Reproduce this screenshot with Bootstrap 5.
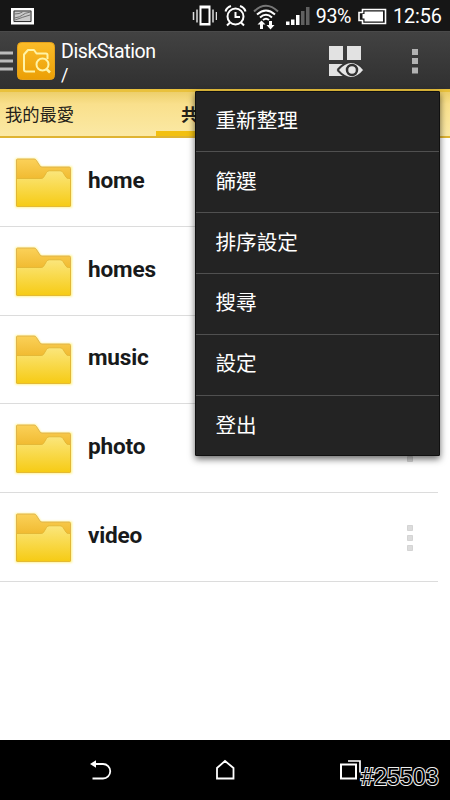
<!DOCTYPE html>
<html lang="zh-Hant">
<head>
<meta charset="utf-8">
<meta name="viewport" content="width=device-width, initial-scale=1">
<title>DiskStation</title>
<link href="https://cdn.jsdelivr.net/npm/bootstrap@5.3.0/dist/css/bootstrap.min.css" rel="stylesheet">
<style>
  body { font-family: Roboto, "Noto Sans CJK TC", sans-serif; background: #fff; }
  .screen { width: 450px; height: 800px; }
  .screen svg { display: block; flex: none; }
  .status-bar { height: 31px; background: #161616; color: #fff; padding: 1px 7px 0 10px; font-size: 19.8px; line-height: 32px; }
  .status-icons { gap: 6px; }
  .status-pct { font-size: 19.6px; letter-spacing: -.4px; padding-top: 2px; }
  .status-time { width: 50px; letter-spacing: -.1px; padding-top: 2px; }
  .action-bar { height: 58px; background: linear-gradient(#424242, #303030); border-top: 1px solid #4a4a4a; color: #fff; }
  .title-block { margin: 6px 0 0 6px; }
  .title-line { font-size: 19.6px; letter-spacing: -.45px; line-height: 23px; }
  .path-line { font-size: 18px; line-height: 24px; }
  .tab-strip { height: 49px; background: linear-gradient(#edcf6b 0, #f9e08c 12px, #fbe9a5 100%); border-top: 3px solid #e9c13c; border-bottom: 2px solid #dfb433; font-size: 17.3px; color: #25221a; }
  .tab-item { line-height: 46px; }
  .tab-fav { width: 156px; padding-left: 5px; }
  .tab-shared { width: 157px; height: 44px; padding-left: 25px; border-bottom: 5px solid #f2c011; font-weight: 600; }
  .file-row { height: 88.75px; width: 438px; border-bottom: 1px solid #dcdcdc; padding: 2px 25px 0 12px; }
  .file-name { font-size: 22.6px; letter-spacing: -.2px; font-weight: 700; color: #181a1b; line-height: 30px; margin: -4px 0 0 12px; }
  .nav-area { height: 60px; background: #000; padding-top: 18px; }
  .nav-keys { width: 274px; }
  .overflow-menu { top: 91px; left: 195px; width: 245px; height: 364.5px; background: #232323; border: 1px solid #101010; box-shadow: 0 3px 7px rgba(0,0,0,.6); border-radius: 1px; }
  .menu-entry { height: 60.9px; border-bottom: 1px solid #505050; padding: 0 0 0 19.5px; font-size: 20.6px; color: #fff; }
  .menu-entry:first-child { height: 60.2px; }
  .menu-entry:last-child { border-bottom: 0; }
  .watermark { left: 361px; top: 762.5px; font: 23.3px/28px "Liberation Sans", sans-serif; color: #000; -webkit-text-stroke: 2px #eee; paint-order: stroke fill; }
</style>
<script src="https://cdn.jsdelivr.net/npm/bootstrap@5.3.0/dist/js/bootstrap.bundle.min.js"></script>
</head>
<body>
<svg width="0" height="0" class="position-absolute" aria-hidden="true">
  <defs>
    <linearGradient id="backGrad" x1="0" y1="0" x2="0" y2="1"><stop offset="0" stop-color="#fbd159"/><stop offset=".45" stop-color="#f0b92e"/></linearGradient>
    <linearGradient id="frontGrad" x1="0" y1="0" x2="0" y2="1"><stop offset="0" stop-color="#fbe67c"/><stop offset="1" stop-color="#f6cb14"/></linearGradient>
    <linearGradient id="appGrad" x1="0" y1="0" x2="0" y2="1"><stop offset="0" stop-color="#fbbc29"/><stop offset="1" stop-color="#eb9f05"/></linearGradient>
    <filter id="glow" x="-20%" y="-20%" width="140%" height="140%"><feGaussianBlur stdDeviation="1.2"/></filter>
    <symbol id="folder" viewBox="0 0 64 60">
      <g transform="translate(0 .5)">
      <path d="M4.500 6h19l5 8H59v39H4.500z" fill="#fff27a" stroke="#fff27a" stroke-width="2" filter="url(#glow)"/>
      <path d="M5.500 5.500H22q1.500 0 2.300 1.300L28 12.500q.8 1 2 1H57q1.500 0 1.500 1.500V52.500H4.500V6.500q0-1 1-1z" fill="url(#backGrad)" stroke="#dcb04a" stroke-width=".9"/>
      <path d="M4.500 25H29q1.800 0 2.700-1.300L34.500 19q1-1.700 3-1.700H48q2 0 3 1.700l3 4.700q.8 1.300 2.500 1.300h2V52q0 1-1 1h-52q-1 0-1-1z" fill="url(#frontGrad)" stroke="#e0b432" stroke-width=".8"/>
      </g>
    </symbol>
    <symbol id="dots" viewBox="0 0 6 26"><path d="M.5.500h5v5h-5zM.5 10.500h5v5h-5zM.5 20.500h5v5h-5z" fill="#dcdcdc" stroke="#c8c8c8" stroke-width=".7"/></symbol>
  </defs>
</svg>

<main class="screen position-relative overflow-hidden d-flex flex-column">
  <header class="status-bar d-flex align-items-center justify-content-between">
    <svg width="25" height="18" viewBox="0 0 25 18"><path d="M2 2h21v14.500H2z" fill="#ddd" stroke="#fff" stroke-width="2"/><path d="M4 4h17v10.500H4z" fill="#c9c9c9" stroke="#333"/><path d="M4.500 11q6-1 8-3t8-3M4.500 7q5 0 8-2M5 13q8-3 15-5" fill="none" stroke="#666" stroke-width=".9"/></svg>
    <div class="status-icons d-flex align-items-center">
      <svg width="26" height="24" viewBox="-1 0 26 24"><path d="M8.500 2.500h9v18h-9z" fill="#111" stroke="#fff" stroke-width="2"/><path d="M8 3.500h10M8 20h10" stroke="#fff" stroke-width="2"/><path d="M5 5.500v13M21 5.500v13M1.500 8v8M24.500 8v8" stroke="#ddd" stroke-width="1.500"/></svg>
      <svg width="24" height="24" viewBox="-.5 0 24 24" fill="none" stroke="#fff" stroke-width="2"><circle cx="12" cy="12.500" r="8"/><path d="M12 8v5h4.500M2 7.500q1-4 5.500-5.500M22 7.500q-1-4-5.500-5.500M6.500 18.500l-3 3M17.500 18.500l3 3"/></svg>
      <svg width="26" height="27" viewBox="1 0 26 27" fill="none"><path d="M2 8.500Q14-3 26 8.500" stroke="#777" stroke-width="2"/><path d="M5 11.500q9-8 18 0M8 14.500q6-5.500 12 0M11 17q3-2.500 6 0" stroke="#fff" stroke-width="2"/><path d="M9.500 17.500l4 4h-2.500V26H8v-4.500H5.500zM18.500 26.500l4-4.500H20v-4h-3v4h-2.500z" fill="#fff"/></svg>
      <svg width="25" height="20" viewBox="0 0 25 20"><path d="M1 15.500h3.500V19H1zM6 13.500h3.500V19H6zM11 9h3.500v10H11z" fill="#fff"/><path d="M16 5h3.500v14H16zM21 1h3.500v18H21z" fill="#606060"/></svg>
      <span class="status-pct">93%</span>
      <svg width="30" height="17" viewBox="0 0 30 17"><path d="M5.500 1.500h23v14h-23v-3H2v-8h3.500z" fill="none" stroke="#fff" stroke-width="1.600"/><path d="M7.500 3.500h18.500v10H7.500v-3h-2V6h2z" fill="#fff"/></svg>
      <span class="status-time">12:56</span>
    </div>
  </header>

  <nav class="action-bar d-flex align-items-center">
    <svg width="13" height="20" viewBox="0 0 13 20"><path d="M0 2h13M0 10h13M0 18h13" stroke="#bcbcbc" stroke-width="3"/></svg>
    <svg width="38" height="38" viewBox="0 0 38 38" class="ms-1"><rect x=".5" y=".5" width="37" height="37" rx="4" fill="url(#appGrad)" stroke="#e4a11b"/><g fill="none" stroke="#fff3a6" stroke-width="2" stroke-linejoin="round"><path d="M18 29.500H9q-2 0-2-2V12.500L11 8h6l2.500 3.500H29q1.500 0 1.500 1.500v4"/><circle cx="25.500" cy="22.500" r="6"/><path d="M29.500 27l3.500 3.500" stroke-width="2.500"/></g></svg>
    <div class="title-block">
      <div class="title-line">DiskStation</div>
      <div class="path-line">/</div>
    </div>
    <svg class="ms-auto" width="36" height="34" viewBox="0 -1 36 34"><path d="M1 1h14v14H1zM19 1h14v14H19zM1 19h14v12H1z" fill="#e2e2e2"/><path d="M9.500 25q14-16 27 0q-13 16-27 0" fill="#e6e6e6" stroke="#353535" stroke-width="2"/><circle cx="24" cy="25" r="5" fill="#e6e6e6" stroke="#333" stroke-width="2.500"/></svg>
    <svg width="86" height="27" viewBox="0 0 86 27"><path d="M48 2h6v6h-6zM48 11h6v6h-6zM48 20.500h6v6h-6z" fill="#b2b2b2"/></svg>
  </nav>

  <div class="tab-strip d-flex">
    <div class="tab-item tab-fav">我的最愛</div>
    <div class="tab-item tab-shared">共享</div>
  </div>

  <section class="flex-grow-1">
    <div class="file-row d-flex align-items-center"><svg width="64" height="60"><use href="#folder"/></svg><span class="file-name">home</span><svg class="ms-auto" width="6" height="26"><use href="#dots"/></svg></div>
    <div class="file-row d-flex align-items-center"><svg width="64" height="60"><use href="#folder"/></svg><span class="file-name">homes</span><svg class="ms-auto" width="6" height="26"><use href="#dots"/></svg></div>
    <div class="file-row d-flex align-items-center"><svg width="64" height="60"><use href="#folder"/></svg><span class="file-name">music</span><svg class="ms-auto" width="6" height="26"><use href="#dots"/></svg></div>
    <div class="file-row d-flex align-items-center"><svg width="64" height="60"><use href="#folder"/></svg><span class="file-name">photo</span><svg class="ms-auto" width="6" height="26"><use href="#dots"/></svg></div>
    <div class="file-row d-flex align-items-center"><svg width="64" height="60"><use href="#folder"/></svg><span class="file-name">video</span><svg class="ms-auto" width="6" height="26"><use href="#dots"/></svg></div>
  </section>

  <footer class="nav-area d-flex justify-content-center">
    <div class="d-flex justify-content-between nav-keys">
      <svg width="24" height="24" viewBox="0 0 24 24" fill="none" stroke="#fff" stroke-width="1.800"><path d="M5 6h10a7.200 7.200 0 0 1 0 14.500H4.500"/><path d="M2 6L8 2.300v7.400z" fill="#fff" stroke="none"/></svg>
      <svg width="24" height="24" viewBox="0 0 24 24" fill="none" stroke="#fff" stroke-width="1.800"><path d="M4 20.500V10L12 3l8.500 7v10.500z"/></svg>
      <svg width="24" height="24" viewBox="0 0 24 24" fill="none" stroke="#fff"><path d="M3 6.500h15V20.500H3z" stroke-width="2"/><path d="M10 3h12V14.500" stroke-width="1.700"/></svg>
    </div>
  </footer>

  <div class="overflow-menu position-absolute">
    <div class="menu-entry d-flex align-items-center">重新整理</div>
    <div class="menu-entry d-flex align-items-center">篩選</div>
    <div class="menu-entry d-flex align-items-center">排序設定</div>
    <div class="menu-entry d-flex align-items-center">搜尋</div>
    <div class="menu-entry d-flex align-items-center">設定</div>
    <div class="menu-entry d-flex align-items-center">登出</div>
  </div>
  <div class="watermark position-absolute">#25503</div>
</main>
</body>
</html>
